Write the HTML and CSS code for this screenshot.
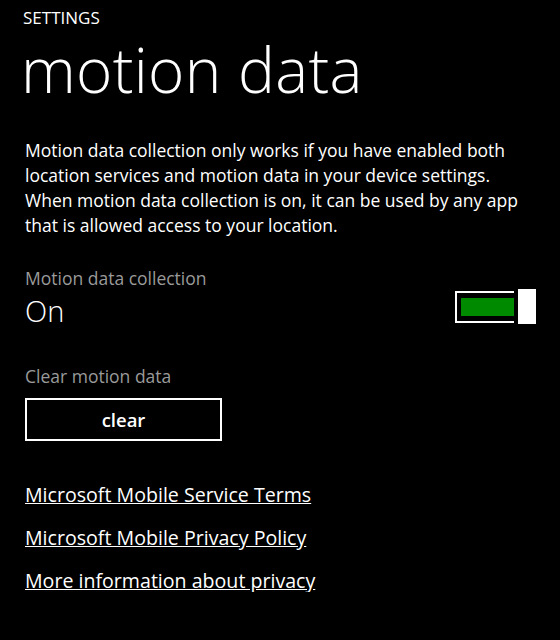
FILE: index.html
```html
<!DOCTYPE html>
<html lang="en">
<head>
    <meta charset="UTF-8">
    <meta name="viewport" content="width=device-width, initial-scale=1.0">
    <title>motion data</title>
    <link rel="stylesheet" href="styles.css">
</head>
<body>
    <div class="page">
        <div class="header">
            <div class="appname">SETTINGS</div>
            <h1 class="pagetitle">motion data</h1>
        </div>

        <p class="intro">Motion data collection only works if you have enabled both location services and motion data in your device settings. When motion data collection is on, it can be used by any app that is allowed access to your location.</p>

        <div class="setting">
            <div class="label">Motion data collection</div>
            <div class="togglerow">
                <span class="state">On</span>
                <div class="toggle">
                    <div class="track"><div class="fill"></div></div>
                    <div class="thumb"></div>
                </div>
            </div>
        </div>

        <div class="setting clearsetting">
            <div class="label">Clear motion data</div>
            <button class="btn">clear</button>
        </div>

        <div class="links">
            <a href="#">Microsoft Mobile Service Terms</a>
            <a href="#">Microsoft Mobile Privacy Policy</a>
            <a href="#">More information about privacy</a>
        </div>
    </div>
</body>
</html>
```

FILE: styles.css
```css
body{
    margin: 0;
    background-color: #000;
    color: #fff;
    font-family: "Open Sans", "Noto Sans", sans-serif;
}
.page{
    padding: 8px 24px 0 25px;
}
.appname{
    font-size: 17px;
    margin-left: -2px;
    line-height: 20px;
}
.pagetitle{
    font-size: 62px;
    font-weight: 300;
    margin: 10px 0 0 -4px;
    line-height: 62px;
    letter-spacing: 0.3px;
}
.intro{
    font-size: 17.5px;
    line-height: 25px;
    margin: 38px 0 0 0;
    width: 505px;
}
.setting{
    margin-top: 29px;
}
.clearsetting{
    margin-top: 34px;
}
.label{
    color: #9a9a9a;
    font-size: 17.5px;
    line-height: 22px;
}
.togglerow{
    display: flex;
    justify-content: space-between;
    align-items: flex-start;
    margin-top: 2px;
}
.state{
    font-size: 29px;
    font-weight: 300;
    line-height: 40px;
}
.toggle{
    display: flex;
    align-items: center;
    gap: 4px;
    margin-top: -2px;
}
.track{
    width: 59px;
    height: 32px;
    border: 2px solid #fff;
    border-right: none;
    box-sizing: border-box;
    padding: 5px 0 5px 4px;
}
.fill{
    height: 100%;
    background-color: #008a00;
}
.thumb{
    width: 18px;
    height: 35px;
    background-color: #fff;
}
.btn{
    display: block;
    margin-top: 11px;
    width: 197px;
    height: 43px;
    background: #000;
    color: #fff;
    border: 2px solid #fff;
    font-family: inherit;
    font-size: 18.5px;
    font-weight: 600;
}
.links{
    margin-top: 43px;
    display: flex;
    flex-direction: column;
    gap: 21px;
}
.links a{
    color: #fff;
    font-size: 19.6px;
    line-height: 22px;
    width: fit-content;
}
```
